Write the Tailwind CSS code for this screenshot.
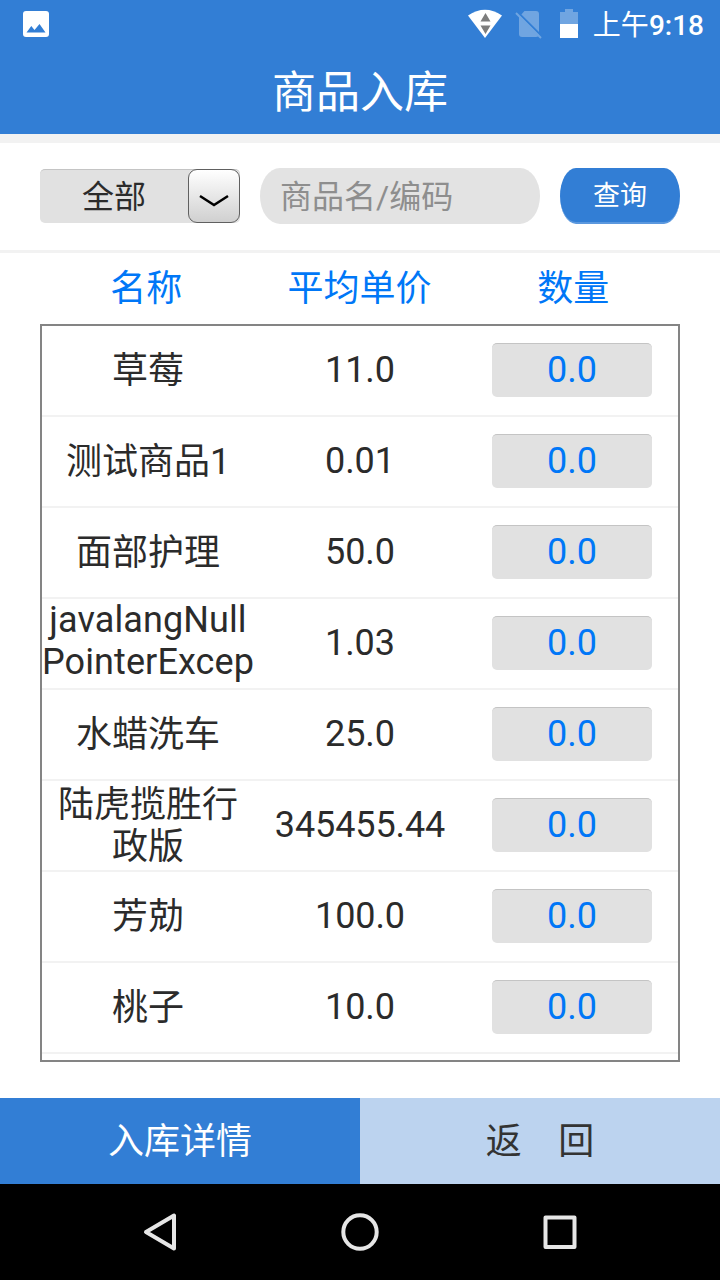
<!DOCTYPE html>
<html lang="zh-CN">
    <head>
        <meta charset="UTF-8" />
        <meta name="viewport" content="width=device-width, initial-scale=1.0" />
        <title>商品入库</title>
        <script src="https://cdn.jsdelivr.net/npm/@tailwindcss/browser@4"></script>
    </head>
    <body class="bg-white">
        <div
            class="w-[720px] h-[1280px] flex flex-col overflow-hidden text-[#2b2b2b] font-[Roboto,'Noto_Sans_CJK_SC',sans-serif]"
        >
            <header class="h-[134px] shrink-0 bg-[#327ed5] text-white">
                <!-- status bar -->
                <div class="h-12 flex items-center justify-between pl-[23px] pr-4">
                    <svg class="w-[26px] h-[26px]" viewBox="0 0 26 26">
                        <rect width="26" height="26" rx="3" fill="#fff" />
                        <path d="M3.500 21.500 8.300 15l3.200 4L16.500 13l6 8.500z" fill="#327ed5" />
                    </svg>
                    <div class="flex items-center">
                        <svg class="w-[36px] h-[30px]" viewBox="0 0 36 30">
                            <path d="M1 6.500Q18-5 35 6.500L18 29z" fill="#fff" />
                            <path d="M18.500 4l5 8.500h-10zM18.500 25l5-8.500h-10z" fill="#7d7d7d" />
                        </svg>
                        <svg class="w-[27px] h-[30px] ml-[12px]" viewBox="0 0 27 30">
                            <path d="M9.500 2H21q3 0 3 3v20q0 3-3 3H7q-3 0-3-3V8z" fill="#70a5e1" />
                            <path d="M3 3.500l24 24" stroke="#327ed5" stroke-width="2" />
                            <path d="M1 4l25 25" stroke="#70a5e1" stroke-width="2" />
                        </svg>
                        <svg class="w-[20px] h-[30px] ml-[17px]" viewBox="0 0 20 30">
                            <path d="M6 0h8v3h5v12H1V3h5z" fill="#70a5e1" />
                            <path d="M1 15h18v14H1z" fill="#fff" />
                        </svg>
                        <span class="pt-1 ml-[14px] text-[28px] leading-[44px] font-medium whitespace-nowrap"
                            ><span class="font-normal">上午</span>9:18</span
                        >
                    </div>
                </div>
                <h1 class="pt-0.5 text-center text-[44px] leading-[86px]">商品入库</h1>
            </header>

            <!-- filter -->
            <div class="h-[119px] shrink-0 border-t-[9px] border-b-[3px] border-[#f2f2f2] bg-white">
                <div class="flex px-10 pt-[25px] gap-5">
                    <div
                        class="w-[200px] h-[54px] mt-px flex rounded-[5px] bg-[#e1e1e1] border-t border-[#c4c4c4]"
                    >
                        <span class="flex-1 text-center text-[32px] leading-[54px]">全部</span>
                        <div
                            class="w-[52px] h-[54px] -mt-px rounded-[9px] border border-[#606060] bg-linear-to-b from-white to-[#d0d0d0]"
                        >
                            <svg class="w-[50px] h-[52px]" viewBox="0 0 50 52" fill="none">
                                <path d="M11 26l14 9 14-9" stroke="#000" stroke-width="2.500" />
                            </svg>
                        </div>
                    </div>
                    <div
                        class="w-[280px] h-14 pl-5 rounded-[20px/28px] bg-[#e3e3e3] text-[#8e8e8e] text-[32px] leading-[58px]"
                    >
                        商品名/编码
                    </div>
                    <button
                        class="w-[120px] h-14 pt-0.5 rounded-[16px/28px] bg-[#327ed5] border-b-2 border-[#5b98de] text-white text-[27px] leading-[52px]"
                    >
                        查询
                    </button>
                </div>
            </div>

            <!-- list -->
            <div
                class="h-[71px] shrink-0 mx-10 grid grid-cols-3 text-center text-[36px] leading-[72px] text-[#0077f7]"
            >
                <span class="-ml-px">名称</span>
                <span class="-ml-px">平均单价</span>
                <span>数量</span>
            </div>
            <div id="goods" class="h-[738px] shrink-0 mx-10 border-2 border-[#848484] overflow-hidden"></div>

            <!-- actions -->
            <div class="mt-9 h-[86px] shrink-0 grid grid-cols-2 text-center text-[36px] leading-[82px]">
                <button class="pt-0.5 bg-[#327ed5] text-white">入库详情</button>
                <button class="pt-0.5 bg-[#bcd3ef] text-[#333333]">返&emsp;回</button>
            </div>

            <!-- system navigation -->
            <nav class="h-24 shrink-0 bg-black flex items-center justify-center gap-[160px]">
                <svg class="w-10 h-10" viewBox="0 0 40 40" fill="none" stroke="#e6e6e6" stroke-width="4">
                    <path d="M34 3.500v33L6 20z" stroke-linejoin="round" />
                </svg>
                <svg class="w-10 h-10" viewBox="0 0 40 40" fill="none" stroke="#e6e6e6" stroke-width="4">
                    <circle cx="20" cy="20" r="16.700" />
                </svg>
                <svg class="w-10 h-10" viewBox="0 0 40 40" fill="none" stroke="#e6e6e6" stroke-width="4">
                    <rect x="5.500" y="5.500" width="29" height="29.500" stroke-linejoin="round" />
                </svg>
            </nav>
        </div>

        <script>
            const goods = [
                { name: "草莓", price: "11.0" },
                { name: "测试商品1", price: "0.01" },
                { name: "面部护理", price: "50.0" },
                { name: "javalangNull<br />PointerExcep", price: "1.03", latin: true },
                { name: "水蜡洗车", price: "25.0" },
                { name: "陆虎揽胜行<br />政版", price: "345455.44" },
                { name: "芳勀", price: "100.0" },
                { name: "桃子", price: "10.0" },
            ]

            document.getElementById("goods").innerHTML = goods
                .map((item) => {
                    // latin names sit a little higher than chinese ones
                    return `
                        <div class="h-[91px] pb-px grid grid-cols-3 items-center text-center text-[36px] leading-[42px] border-b-2 border-[#f2f2f2]">
                            <span class="whitespace-nowrap ${item.latin ? "-mt-1 tracking-[0.1px]" : "mt-px"}">${item.name}</span>
                            <span class="-mt-px tracking-[-0.1px]">${item.price}</span>
                            <span class="w-[160px] h-[54px] mx-auto rounded-[5px] bg-[#e1e1e1] border-t border-[#c4c4c4] text-[#0077f7] leading-[53px]">0.0</span>
                        </div>
                    `
                })
                .join("")
        </script>
    </body>
</html>
